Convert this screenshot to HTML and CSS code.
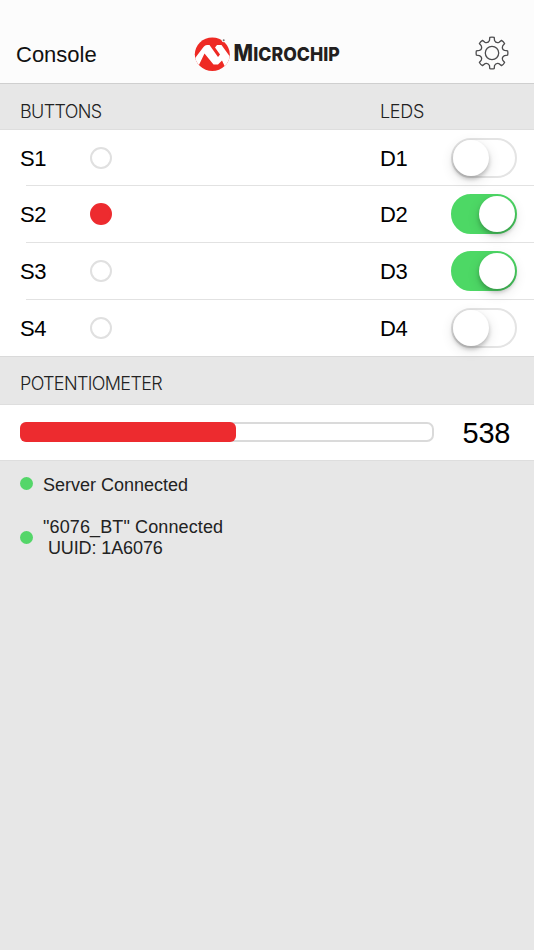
FILE: index.html
```html
<!DOCTYPE html>
<html lang="en">
<head>
<meta charset="utf-8">
<title>Console</title>
<link rel="stylesheet" href="styles.css">
</head>
<body>
<header class="navbar">
  <h1 class="title">Console</h1>
  <svg class="logo" width="160" height="40" viewBox="192 34 160 40" role="img" aria-label="Microchip">
    <defs><clipPath id="disc"><ellipse cx="212.300" cy="54.300" rx="17.500" ry="16.700"/></clipPath></defs>
    <g clip-path="url(#disc)">
      <rect x="194" y="36" width="37" height="36" fill="#ee2a24"/>
      <path d="M192 62 L203.500 47 Q205 45 207 45 L209.500 45 L218 57 L220 54.500 L215 47.500 L217 45 L221.500 45 L233 61 L226 69 L222 60.500 L218 64.500 L213.500 64.500 L204.500 53.500 L197.500 68 Z" fill="#fff"/>
    </g>
    <circle cx="223.700" cy="40.300" r="2" fill="#fcfcfc"/>
    <circle cx="223.700" cy="40.300" r="1" fill="#777"/>
    <g class="wordmark"><text x="233.600" y="60.500" font-size="23.200" textLength="19.500" lengthAdjust="spacingAndGlyphs">M</text><text x="253.300" y="60.500" font-size="19" textLength="86.500" lengthAdjust="spacingAndGlyphs">ICROCHIP</text></g>
  </svg>
  <svg class="gear" width="34" height="34" viewBox="-17 -17 34 34" fill="none" stroke="#4c4c4e" stroke-width="1.300" stroke-linejoin="round">
    <circle r="6.700"/>
    <path id="gear-outline"/>
  </svg>
</header>
<main>
  <div class="section"><h2 class="buttons-heading">BUTTONS</h2><h2 class="leds-heading">LEDS</h2></div>
  <ul class="rows">
    <li><span class="name">S1</span><i class="dot"></i><span class="led">D1</span><i class="switch"></i></li>
    <li><span class="name">S2</span><i class="dot pressed"></i><span class="led">D2</span><i class="switch on"></i></li>
    <li><span class="name">S3</span><i class="dot"></i><span class="led">D3</span><i class="switch on"></i></li>
    <li><span class="name">S4</span><i class="dot"></i><span class="led">D4</span><i class="switch"></i></li>
  </ul>
  <div class="section pot"><h2 class="pot-heading">POTENTIOMETER</h2></div>
  <div class="meter-row"><div class="meter"><div class="fill"></div></div><span class="value">538</span></div>
  <div class="status server"><i class="light"></i><span>Server Connected</span></div>
  <div class="status device"><i class="light"></i><span><span class="device-name">"6076_BT" Connected</span><br><span class="uuid">&nbsp;UUID: 1A6076</span></span></div>
</main>
<script src="gear.js"></script>
</body>
</html>
```
FILE: gear.js
```js
// Eight-toothed gear outline with rounded shoulders.
const point = (r, deg) => {
  const a = deg * Math.PI / 180;
  return (r * Math.sin(a)).toFixed(2) + ' ' + (-r * Math.cos(a)).toFixed(2);
};
let d = '';
for (let i = 0; i < 8; i++) {
  const c = i * 45;
  d += (i ? 'L' : 'M') + point(15.8, c - 8) + 'Q' + point(16.2, c) + ' ' + point(15.8, c + 8);
  d += 'L' + point(12.8, c + 11.5) + 'Q' + point(10.3, c + 22.5) + ' ' + point(12.8, c + 33.5);
}
document.getElementById('gear-outline').setAttribute('d', d + 'Z');
```
FILE: styles.css
```css
* { box-sizing: border-box; }
body { margin: 0; min-height: 950px; background: #e7e7e7; color: #000; font-family: "Liberation Sans", Arial, sans-serif; }
h1, h2 { margin: 0; font-weight: 400; }
.navbar { height: 84px; padding: 24px 25px 0 16px; display: flex; align-items: center; background: #fcfcfc; border-bottom: 1px solid #cfcfcf; }
.title { width: 176px; padding-top: 2px; font-size: 22px; line-height: 30px; color: #111; }
.logo { overflow: visible; }
.wordmark { font-family: Inter, "Liberation Sans", sans-serif; font-weight: 800; fill: #231f20; }
.gear { margin: -2px 0 0 auto; }
.section { display: flex; align-items: center; padding: 9px 20px 0; height: 46px; border-bottom: 1px solid #dedede; }
h2 { font-family: Inter, "Liberation Sans", sans-serif; font-weight: 300; font-size: 18px; letter-spacing: -.65px; color: #222; }
.buttons-heading { width: 360px; }
.leds-heading { letter-spacing: -.3px; }
.rows { list-style: none; margin: 0; padding: 0; background: #fff; }
.rows li { height: 57px; padding: 0 17px 1px 20px; display: flex; align-items: center; font-size: 22px; letter-spacing: -.4px; background: linear-gradient(#e2e2e2, #e2e2e2) 26px 100% / 100% 1px no-repeat; }
.rows li:first-child { height: 56px; }
.rows li:last-child { height: 56px; padding-bottom: 0; background: none; }
.name { width: 70px; padding-top: 2px; }
.dot { width: 22px; height: 22px; border: 2px solid #e0e0e0; border-radius: 50%; }
.pressed { background: #ed2b2f; border-color: #ed2b2f; }
.led { margin-left: 268px; width: 71px; padding-top: 2px; }
.switch { width: 66px; height: 40px; flex: none; border-radius: 20px; border: 2px solid #e4e4e4; display: flex; }
.switch::before { content: ""; width: 36px; height: 36px; border-radius: 50%; background: #fff; box-shadow: 0 3px 4px rgba(0,0,0,.22), 0 4px 13px rgba(0,0,0,.12); }
.on { background: #4dd865; border-color: #4dd865; justify-content: flex-end; }
.pot { height: 49px; padding-top: 6px; border-top: 1px solid #dadada; }
.meter-row { height: 56px; background: #fff; display: flex; align-items: center; padding: 0 20px 1px 19.500px; border-bottom: 1px solid #dedede; }
.meter { width: 414px; height: 20px; border: 2px solid #dadada; border-radius: 7px; }
.fill { margin: -2px 0 0 -2px; width: 216.500px; height: 20px; background: #ed2b2f; border-radius: 6px; }
.value { margin-left: 29px; padding-top: 2px; font-size: 29px; letter-spacing: -.2px; }
.status { display: flex; align-items: center; padding-left: 19.500px; font-size: 18px; line-height: 21px; color: #222; }
.server { margin-top: 14px; }
.server .light { margin-top: -4px; }
.device { margin-top: 21px; }
.device .light { margin-top: -2px; }
.device-name { letter-spacing: .12px; }
.uuid { letter-spacing: -.1px; }
.light { width: 13px; height: 13px; border-radius: 50%; background: #54d669; margin-right: 10.500px; }
```
